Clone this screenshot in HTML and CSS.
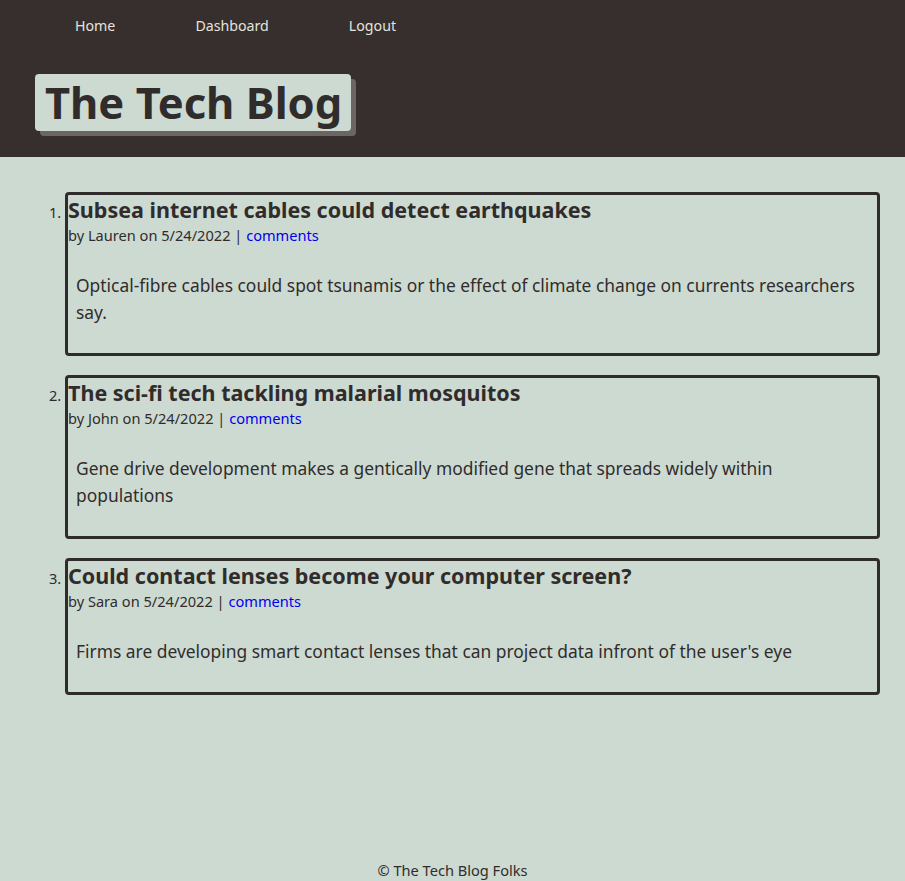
FILE: index.html
```html
<!DOCTYPE html>
<html lang="en">
<head>
<meta charset="utf-8">
<title>The Tech Blog</title>
<link rel="stylesheet" href="styles.css">
</head>
<body>
<header class="site-header">
  <nav class="nav">
    <a href="#">Home</a>
    <a href="#">Dashboard</a>
    <a href="#">Logout</a>
  </nav>
  <h1 class="brand">The Tech Blog</h1>
</header>
<main class="main">
  <ol class="posts">
    <li class="post">
      <h2 class="post-title">Subsea internet cables could detect earthquakes</h2>
      <p class="meta">by Lauren on 5/24/2022 | <a href="#">comments</a></p>
      <div class="post-body"><p>Optical-fibre cables could spot tsunamis or the effect of climate change on currents researchers say.</p></div>
    </li>
    <li class="post">
      <h2 class="post-title">The sci-fi tech tackling malarial mosquitos</h2>
      <p class="meta">by John on 5/24/2022 | <a href="#">comments</a></p>
      <div class="post-body"><p>Gene drive development makes a gentically modified gene that spreads widely within populations</p></div>
    </li>
    <li class="post">
      <h2 class="post-title">Could contact lenses become your computer screen?</h2>
      <p class="meta">by Sara on 5/24/2022 | <a href="#">comments</a></p>
      <div class="post-body"><p>Firms are developing smart contact lenses that can project data infront of the user's eye</p></div>
    </li>
  </ol>
</main>
<footer class="footer">© The Tech Blog Folks</footer>
</body>
</html>
```

FILE: styles.css
```css
html, body {
  margin: 0;
  padding: 0;
}
body {
  background: #cddad1;
  color: #312c2c;
  font-family: "Noto Sans", "Open Sans", sans-serif;
  min-height: 881px;
  display: flex;
  flex-direction: column;
}
.site-header {
  background: #372f2e;
  height: 157px;
  box-sizing: border-box;
  padding: 16px 0 0 35px;
}
.nav {
  display: flex;
  padding-left: 40px;
}
.nav a {
  color: #e3e4dd;
  text-decoration: none;
  font-size: 14.2px;
  line-height: 20px;
  margin-right: 80px;
}
.brand {
  display: inline-block;
  margin: 38px 0 0 0;
  background: #cddad1;
  color: #312c2c;
  font-size: 43.5px;
  line-height: 57px;
  font-weight: 700;
  padding: 0 9px 0 10px;
  border-radius: 4px;
  box-shadow: 5px 5px 0 #6b6564;
}
.main {
  flex: 1;
  padding: 35px 25px 0 0;
}
.posts {
  margin: 0;
  padding-left: 65px;
}
.post {
  border: 3px solid #312c2c;
  border-radius: 4px;
  margin-bottom: 19px;
  font-size: 14.6px;
}
.post-title {
  margin: 0;
  font-size: 21.5px;
  line-height: 30px;
  font-weight: 700;
}
.meta {
  margin: 0;
  font-size: 14.6px;
  line-height: 20px;
}
.meta a {
  color: #0000ee;
  text-decoration: none;
}
.post-body {
  padding: 10px 10px 10px 8px;
}
.post-body p {
  margin: 17px 0;
  font-size: 17.4px;
  line-height: 27px;
}
.footer {
  text-align: center;
  font-size: 14.6px;
  line-height: 20px;
  padding-bottom: 1px;
}
```
